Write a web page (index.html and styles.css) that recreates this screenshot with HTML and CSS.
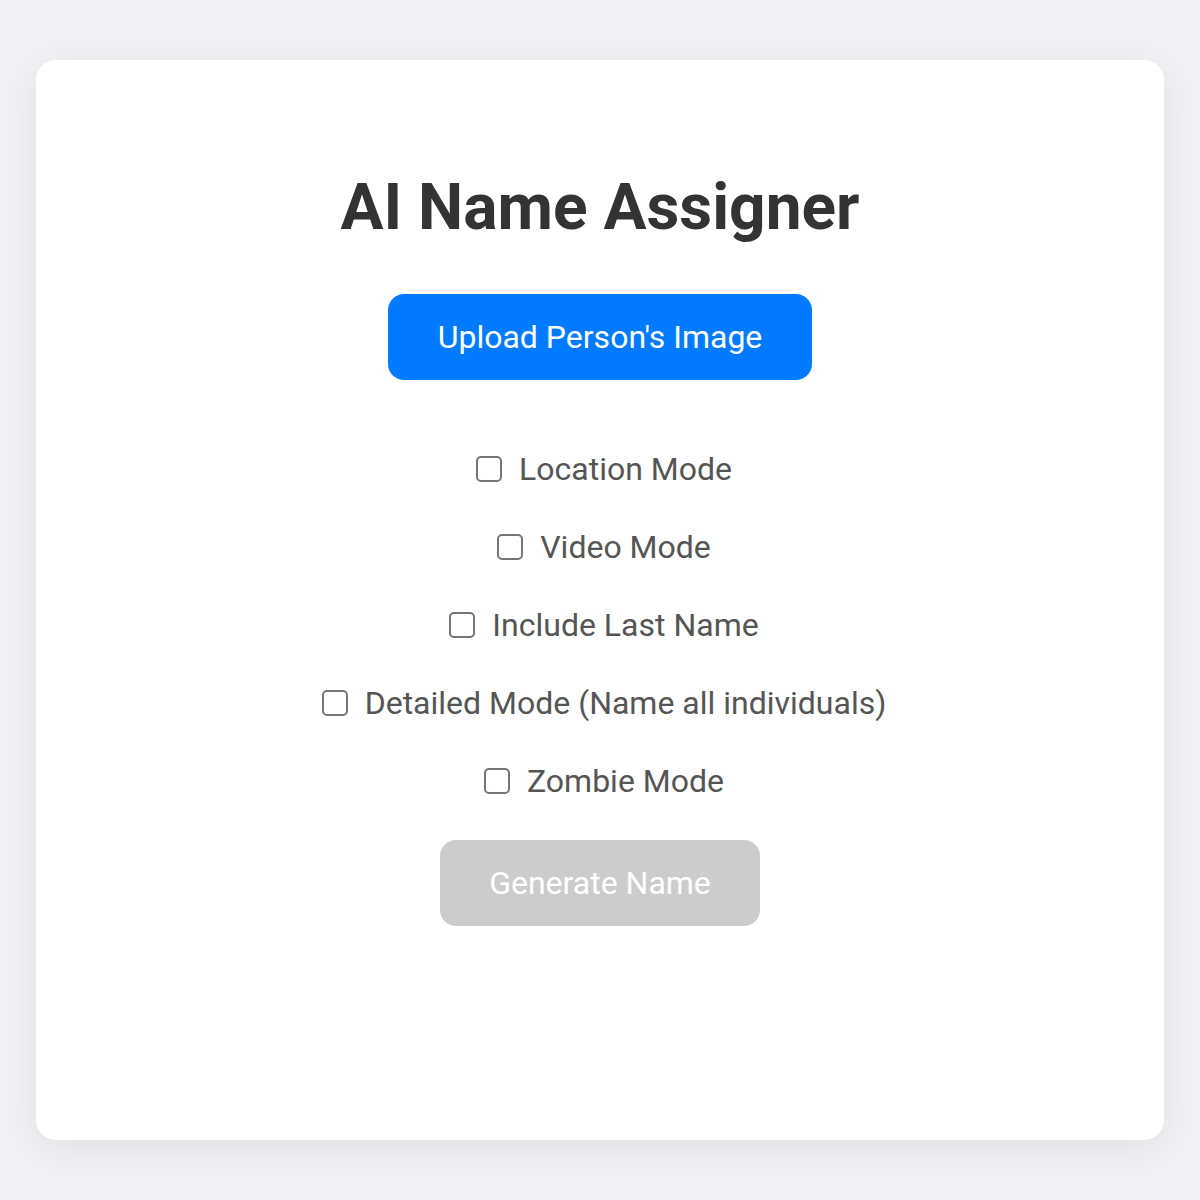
FILE: index.html
```html
<!DOCTYPE html>
<html lang="en">
<head>
<meta charset="utf-8">
<title>AI Name Assigner</title>
<link rel="stylesheet" href="styles.css">
</head>
<body>
  <main class="card">
    <h1 class="title">AI Name Assigner</h1>
    <button class="btn btn-upload" type="button">Upload Person's Image</button>
    <div class="options">
      <label class="option"><input type="checkbox" class="check"><span>Location Mode</span></label>
      <label class="option"><input type="checkbox" class="check"><span>Video Mode</span></label>
      <label class="option"><input type="checkbox" class="check"><span>Include Last Name</span></label>
      <label class="option"><input type="checkbox" class="check"><span>Detailed Mode (Name all individuals)</span></label>
      <label class="option"><input type="checkbox" class="check"><span>Zombie Mode</span></label>
    </div>
    <button class="btn btn-generate" type="button" disabled>Generate Name</button>
  </main>
</body>
</html>
```
FILE: styles.css
```css
* { box-sizing: border-box; }
html, body { margin: 0; padding: 0; }
body {
  background: #f0f2f5;
  font-family: Roboto, "Liberation Sans", Arial, sans-serif;
  padding: 60px 36px;
}
.card {
  background: #fff;
  border-radius: 20px;
  box-shadow: 0 8px 40px rgba(0, 0, 0, 0.08);
  height: 1080px;
  display: flex;
  flex-direction: column;
  align-items: center;
  padding-top: 110px;
}
.title {
  margin: 0;
  font-size: 64px;
  font-weight: 700;
  line-height: 75px;
  color: #333;
}
.btn {
  font-family: inherit;
  font-size: 32px;
  line-height: 38px;
  border: none;
  border-radius: 16px;
  color: #fff;
  padding: 24px 48px;
}
.btn-upload {
  background: #007bff;
  margin-top: 49px;
  width: 424px;
}
.btn-generate {
  background: #ccc;
  margin-top: 40px;
  width: 320px;
}
.options {
  margin-top: 70px;
  display: flex;
  flex-direction: column;
  align-items: center;
  gap: 40px;
}
.option {
  display: flex;
  align-items: center;
  gap: 17px;
  font-size: 32px;
  line-height: 38px;
  color: #555;
}
.check {
  appearance: none;
  -webkit-appearance: none;
  margin: 0 0 0 8px;
  width: 26px;
  height: 26px;
  border: 2px solid #767676;
  border-radius: 5px;
  background: #fff;
}
```
